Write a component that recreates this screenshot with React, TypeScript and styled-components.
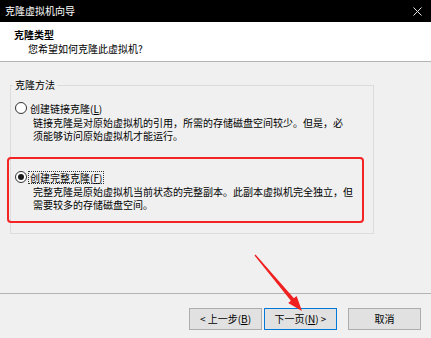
import styled, { createGlobalStyle } from 'styled-components';

const GlobalStyle = createGlobalStyle`
  html, body {
    margin: 0;
    padding: 0;
    background: #f0f0f0;
  }
`;

type CloneOption = {
  key: string;
  label: string;
  hotkey: string;
  lines: string[];
  checked: boolean;
};

const OPTIONS: CloneOption[] = [
  {
    key: 'linked',
    label: '创建链接克隆',
    hotkey: 'L',
    lines: ['链接克隆是对原始虚拟机的引用，所需的存储磁盘空间较少。但是，必', '须能够访问原始虚拟机才能运行。'],
    checked: false,
  },
  {
    key: 'full',
    label: '创建完整克隆',
    hotkey: 'F',
    lines: ['完整克隆是原始虚拟机当前状态的完整副本。此副本虚拟机完全独立，但', '需要较多的存储磁盘空间。'],
    checked: true,
  },
];

function Option({ option }: { option: CloneOption }) {
  return (
    <div>
      <RadioLine>
        <Radio $checked={option.checked} />
        <RadioLabel $focused={option.checked}>
          {option.label}(<u>{option.hotkey}</u>)
        </RadioLabel>
      </RadioLine>
      <Description>
        {option.lines.map((line) => (
          <DescLine key={line}>{line}</DescLine>
        ))}
      </Description>
    </div>
  );
}

export default function App() {
  const [linked, full] = OPTIONS;
  return (
    <>
      <GlobalStyle />
      <Window>
        <TitleBar>
          <span>克隆虚拟机向导</span>
          <svg width="9" height="9" viewBox="0 0 9 9">
            <path d="M0.5 0.5 L8.5 8.5 M8.5 0.5 L0.5 8.5" stroke="#e6e6e6" strokeWidth="1" />
          </svg>
        </TitleBar>
        <Header>
          <HeaderTitle>克隆类型</HeaderTitle>
          <HeaderSub>您希望如何克隆此虚拟机?</HeaderSub>
        </Header>
        <Body>
          <GroupBox>
            <Legend>克隆方法</Legend>
            <Option option={linked} />
            <Highlight>
              <Option option={full} />
            </Highlight>
          </GroupBox>
        </Body>
        <Footer>
          <NavButtons>
            <Button>&lt; 上一步(<u>B</u>)</Button>
            <Button $primary>
              下一页(<u>N</u>) &gt;
            </Button>
          </NavButtons>
          <Button>取消</Button>
        </Footer>
        <ArrowLayer width="431" height="338" viewBox="0 0 431 338">
          <polygon
            points="255.5,254.6 293.9,298.2 296.6,296.0 302,311 288.2,303.0 290.9,300.8 254.5,255.4"
            fill="#f02020"
          />
        </ArrowLayer>
      </Window>
    </>
  );
}

const Window = styled.div`
  position: relative;
  width: 431px;
  height: 338px;
  display: flex;
  flex-direction: column;
  background: #f0f0f0;
  color: #000;
  font-family: 'Noto Sans CJK SC', 'Noto Sans', sans-serif;
  font-size: 10px;
  overflow: hidden;
`;

const TitleBar = styled.div`
  height: 22px;
  flex: none;
  display: flex;
  align-items: center;
  justify-content: space-between;
  padding: 0 9px 0 5px;
  background: #000;
  color: #fff;
  line-height: 14px;
`;

const Header = styled.div`
  height: 40px;
  flex: none;
  box-sizing: border-box;
  padding: 6px 0 0 14px;
  background: #fff;
  border-bottom: 1px solid #b4b4b4;
`;

const HeaderTitle = styled.div`
  font-weight: bold;
  line-height: 14px;
`;

const HeaderSub = styled.div`
  line-height: 14px;
  padding-left: 14px;
`;

const Body = styled.div`
  flex: 1;
  padding: 16px 0 0 10px;
`;

const GroupBox = styled.fieldset`
  margin: 0;
  width: 364px;
  box-sizing: border-box;
  border: 1px solid #dcdcdc;
  padding: 9px 0 10px 4px;
`;

const Legend = styled.legend`
  padding: 0 2px;
  margin-left: -2px;
  line-height: 14px;
`;

const RadioLine = styled.div`
  display: flex;
  align-items: center;
  gap: 3px;
  height: 14px;
  line-height: 14px;
`;

const Radio = styled.span<{ $checked?: boolean }>`
  width: 12px;
  height: 12px;
  flex: none;
  box-sizing: border-box;
  border-radius: 50%;
  border: 1px solid #333;
  background: #fff;
  display: flex;
  align-items: center;
  justify-content: center;

  &::after {
    content: '';
    display: ${(p) => (p.$checked ? 'block' : 'none')};
    width: 6px;
    height: 6px;
    border-radius: 50%;
    background: #1a1a1a;
  }
`;

const RadioLabel = styled.span<{ $focused?: boolean }>`
  padding: 0 1px;
  margin-left: -1px;
  line-height: 11px;
  outline: ${(p) => (p.$focused ? '1px dotted #333' : 'none')};
`;

const Description = styled.div`
  margin-top: 1px;
  padding-left: 18px;
  white-space: nowrap;
`;

const DescLine = styled.div`
  height: 13px;
  line-height: 13px;
`;

const Highlight = styled.div`
  margin: 15px 0 0 -8px;
  width: 357px;
  box-sizing: border-box;
  padding: 11px 0 10px 6px;
  border: 2px solid #f42424;
  border-radius: 4px;
`;

const Footer = styled.div`
  flex: none;
  display: flex;
  justify-content: flex-end;
  gap: 11px;
  padding: 14px 10px 8px;
  border-top: 1px solid #b4b4b4;
`;

const NavButtons = styled.div`
  display: flex;
  gap: 2px;
`;

const Button = styled.button<{ $primary?: boolean }>`
  width: 73px;
  height: 22px;
  box-sizing: border-box;
  padding: 0;
  background: #e1e1e1;
  border: 1px solid ${(p) => (p.$primary ? '#0078d7' : '#adadad')};
  color: #000;
  font-family: inherit;
  font-size: 10px;
  line-height: 20px;
`;

const ArrowLayer = styled.svg`
  position: absolute;
  left: 0;
  top: 0;
  pointer-events: none;
`;
